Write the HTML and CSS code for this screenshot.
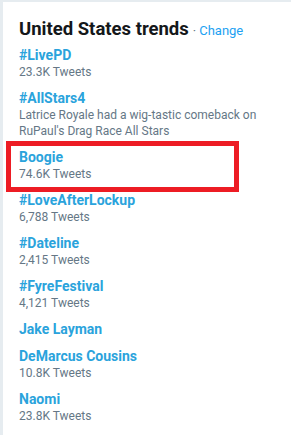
FILE: index.html
```html
<!DOCTYPE html>
<html lang="en">
  <head>
    <meta charset="UTF-8" />
    <meta name="viewport" content="width=device-width, initial-scale=1.0" />
    <title>United States trends</title>
    <link rel="stylesheet" href="styles.css">
  </head>
  <body>
    <div class="trends">
      <div class="trends-header">
        <h3>United States trends</h3>
        <span class="middot">&middot;</span>
        <a href="#" class="change">Change</a>
      </div>
      <ul class="trend-list">
        <li class="trend-item">
          <a href="#" class="trend-name">#LivePD</a>
          <div class="trend-meta">23.3K Tweets</div>
        </li>
        <li class="trend-item">
          <a href="#" class="trend-name">#AllStars4</a>
          <div class="trend-meta">Latrice Royale had a wig-tastic comeback on RuPaul's Drag Race All Stars</div>
        </li>
        <li class="trend-item highlighted">
          <a href="#" class="trend-name">Boogie</a>
          <div class="trend-meta">74.6K Tweets</div>
        </li>
        <li class="trend-item">
          <a href="#" class="trend-name">#LoveAfterLockup</a>
          <div class="trend-meta">6,788 Tweets</div>
        </li>
        <li class="trend-item">
          <a href="#" class="trend-name">#Dateline</a>
          <div class="trend-meta">2,415 Tweets</div>
        </li>
        <li class="trend-item">
          <a href="#" class="trend-name">#FyreFestival</a>
          <div class="trend-meta">4,121 Tweets</div>
        </li>
        <li class="trend-item">
          <a href="#" class="trend-name">Jake Layman</a>
        </li>
        <li class="trend-item">
          <a href="#" class="trend-name">DeMarcus Cousins</a>
          <div class="trend-meta">10.8K Tweets</div>
        </li>
        <li class="trend-item">
          <a href="#" class="trend-name">Naomi</a>
          <div class="trend-meta">23.8K Tweets</div>
        </li>
      </ul>
    </div>
  </body>
</html>
```

FILE: styles.css
```css
body {
  margin: 0;
  padding: 2px 0 0 3px;
  background-color: #e6ecf0;
  font-family: Roboto, "Noto Sans", sans-serif;
  height: 100vh;
  box-sizing: border-box;
}
.trends {
  background-color: #fff;
  height: 100%;
  padding: 15px 16px 0 16px;
  box-sizing: border-box;
}
.trends-header {
  display: flex;
  align-items: baseline;
  margin-bottom: 1px;
}
.trends-header h3 {
  margin: 0;
  font-size: 18.5px;
  font-weight: bold;
  line-height: 24px;
  color: #14171a;
}
.middot {
  margin: 0 3px 0 4px;
  font-size: 13px;
  color: #657786;
}
.change {
  font-size: 13px;
  color: #1da1f2;
  text-decoration: none;
}
.trend-list {
  list-style: none;
  margin: 0;
  padding: 0;
}
.trend-item {
  position: relative;
  padding: 4px 0 5px;
}
.trend-name {
  display: block;
  font-size: 14px;
  font-weight: bold;
  line-height: 18px;
  color: #2aa3dc;
  text-decoration: none;
}
.trend-meta {
  font-size: 12px;
  line-height: 16px;
  color: #657786;
}
.highlighted::after {
  content: "";
  position: absolute;
  top: -3px;
  bottom: -5px;
  left: -13px;
  right: 36px;
  border: 5px solid #ed1c24;
}
```
